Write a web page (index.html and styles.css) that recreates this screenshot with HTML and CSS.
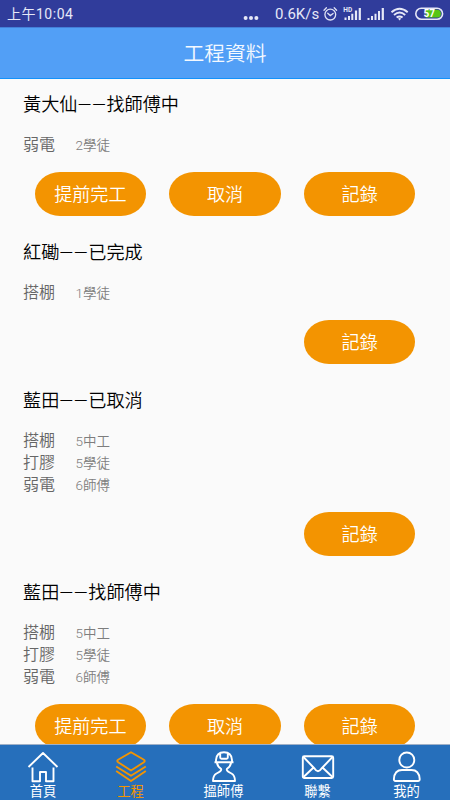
FILE: index.html
```html
<!DOCTYPE html>
<html lang="zh-Hant">
<head>
<meta charset="utf-8">
<title>工程資料</title>
<link rel="stylesheet" href="styles.css">
</head>
<body>
<div class="app">
  <div class="status">
    <span class="clock">上午10:04</span>
    <svg class="dots" width="16" height="6" viewBox="0 0 16 6"><g fill="#e6e8f7"><circle cx="2.6" cy="3" r="2"/><circle cx="8" cy="3" r="2"/><circle cx="13.4" cy="3" r="2"/></g></svg>
    <span class="speed">0.6K/s</span>
    <svg class="system" width="122" height="22" viewBox="322 3 122 22">
      <g fill="none" stroke="#dfe2f4" stroke-width="1.3" stroke-linecap="round">
        <circle cx="330.3" cy="14.6" r="5.4"/><path d="M327.7 13.2l2.6 2.4 2.8-2.1M324 10.2l2.4-2.4M336.6 10.2l-2.4-2.4"/>
      </g>
      <g fill="#e6e8f7">
        <path d="M344.500 17.6h2V20h-2zM348 16h2v4h-2zM351.3 13.7h2V20h-2zM354.9 10.500h2.200v9.500h-2.200zM358.700 8h2.200v12h-2.200z"/>
        <path d="M367.5 18h2v2h-2zM371 16h2v4h-2zM374.5 13.7h2V20h-2zM378 11h2v9h-2zM381.7 8h2.200v12h-2.200z"/>
        <text class="hd" x="343.3" y="12">HD</text>
      </g>
      <g fill="none" stroke="#e6e8f7" stroke-width="1.9"><path d="M391.5 12.3q8.1-7 16.2 0M394 15q5.6-4.8 11.2 0M396.6 17.6q3-2.4 6 0"/></g>
      <path d="M398 18.6q1.6-1.2 3.2 0L399.6 20.4z" fill="#e6e8f7"/>
      <rect x="415.8" y="8.2" width="26.8" height="11" rx="5.5" fill="none" stroke="#e6e8f7" stroke-width="1.6"/>
      <path d="M426 9.8h11a3.9 3.9 0 0 1 0 7.8h-11z" fill="#56c615"/>
      <text class="charge" x="429.2" y="17.2">57</text>
    </svg>
  </div>
  <header class="header">工程資料</header>
  <main class="list">
    <section class="job">
      <h2>黃大仙<span class="dash">——</span>找師傅中</h2>
      <div class="row"><span class="trade">弱電</span><span class="people">2學徒</span></div>
      <div class="actions"><button>提前完工</button><button>取消</button><button>記錄</button></div>
    </section>
    <section class="job">
      <h2>紅磡<span class="dash">——</span>已完成</h2>
      <div class="row"><span class="trade">搭棚</span><span class="people">1學徒</span></div>
      <div class="actions"><button class="last">記錄</button></div>
    </section>
    <section class="job">
      <h2>藍田<span class="dash">——</span>已取消</h2>
      <div class="row"><span class="trade">搭棚</span><span class="people">5中工</span></div>
      <div class="row"><span class="trade">打膠</span><span class="people">5學徒</span></div>
      <div class="row"><span class="trade">弱電</span><span class="people">6師傅</span></div>
      <div class="actions"><button class="last">記錄</button></div>
    </section>
    <section class="job">
      <h2>藍田<span class="dash">——</span>找師傅中</h2>
      <div class="row"><span class="trade">搭棚</span><span class="people">5中工</span></div>
      <div class="row"><span class="trade">打膠</span><span class="people">5學徒</span></div>
      <div class="row"><span class="trade">弱電</span><span class="people">6師傅</span></div>
      <div class="actions"><button>提前完工</button><button>取消</button><button>記錄</button></div>
    </section>
  </main>
  <nav class="nav">
    <a><svg viewBox="0 0 34 34"><path d="M2.500 17L17 3 31.500 17M6.500 17.500V31.200H14V22H20V31.200H27.500V17.500"/></svg><span>首頁</span></a>
    <a class="active"><svg viewBox="0 0 34 34"><path d="M17 2.2L29.500 9.500Q32 11 29.500 12.500L17 20.5 4.500 12.500Q2 11 4.500 9.500zM2.2 16.500L17 25.8 31.8 16.500M2.2 21L17 31 31.800 21"/></svg><span>工程</span></a>
    <a><svg viewBox="0 0 34 34"><path d="M9 12V10Q9.500 2.300 17 2.300T25 10V12M7.500 12.200H26.500M13.200 4V7.500Q13.200 8.700 14.400 8.700H19.600Q20.800 8.700 20.800 7.500V4M10 13Q10.500 16.500 14 18.700C15 20.500 12.500 22 9.500 23.500Q6 25.500 6 31H28Q28 25.500 24.500 23.500C21.500 22 19 20.500 20 18.700Q23.500 16.500 24 13"/></svg><span>搵師傅</span></a>
    <a><svg viewBox="0 0 34 34"><rect x="1.8" y="6.200" width="30.4" height="21.800" rx="1.5"/><path d="M2.5 7L13.500 18.500Q17 24 20.500 18.500L31.500 7M2.5 27L12 18M31.5 27L22 18"/></svg><span>聯繫</span></a>
    <a><svg viewBox="0 0 34 34"><circle cx="16.800" cy="10" r="7.5"/><path d="M5.500 31Q3.800 31 3.900 29Q4.500 20 12 20H21.500Q29 20 29.700 29Q29.800 31 28 31z"/></svg><span>我的</span></a>
  </nav>
</div>
</body>
</html>
```
FILE: styles.css
```css
* { box-sizing: border-box; }
body {
  margin: 0;
  font-family: Roboto, "Noto Sans CJK TC", sans-serif;
  font-weight: 350;
  background: #fafafa;
}
.app {
  height: 800px;
  display: flex;
  flex-direction: column;
  overflow: hidden;
}
.status {
  flex: none;
  height: 27px;
  display: flex;
  align-items: center;
  background: #303c9b;
  color: #e6e8f7;
  line-height: 27px;
  padding: 1px 6px 0 7px;
}
.clock {
  width: 236px;
  font-size: 14px;
  letter-spacing: .5px;
  font-weight: 400;
}
.dots { margin-top: 8px; }
.speed {
  font-size: 15px;
  font-weight: 400;
  width: 47px;
  margin-left: 16px;
  white-space: nowrap;
}
.system { flex: none; }
.hd { font: 700 6.5px Roboto, sans-serif; }
.charge {
  font: 700 10px Roboto, sans-serif;
  fill: #fff;
  text-anchor: middle;
}
.header {
  flex: none;
  height: 52px;
  border-top: 1px solid #437fd9;
  border-bottom: 1px solid #1392fb;
  background: #529ff6;
  color: #f4f9ff;
  font-size: 20.8px;
  line-height: 53px;
  text-align: center;
}
.list {
  flex: 1;
  min-height: 0;
  overflow: hidden;
}
.job { padding: 13px 23px 11.5px 23px; }
h2 {
  margin: 0 0 16px;
  height: 26px;
  font-size: 18.15px;
  font-weight: 350;
  line-height: 26px;
  color: #000;
}
.dash { letter-spacing: .5px; }
.row {
  display: flex;
  height: 22px;
  line-height: 22px;
  color: #666;
}
.trade { width: 52.5px; font-size: 16px; }
.people {
  font-size: 13.5px;
  color: #7d7d7d;
}
.actions {
  display: grid;
  grid-template-columns: repeat(3, 1fr);
  justify-items: center;
  margin-top: 16px;
}
button {
  width: 111.5px;
  height: 43.5px;
  border: 0;
  padding: 0 0 1px;
  border-radius: 25px / 22px;
  background: #f39401;
  color: #fff;
  font: 350 18.1px Roboto, "Noto Sans CJK TC", sans-serif;
}
.last { grid-column: 3; }
.nav {
  flex: none;
  height: 56px;
  display: grid;
  grid-template-columns: 86px 89px 97px 91px 87px;
  border-top: 1px solid #9fb0c7;
  background: #266fbb;
  color: #fff;
}
.nav a {
  display: flex;
  flex-direction: column;
  align-items: center;
  padding-top: 5px;
  font-size: 13.3px;
  font-weight: 400;
  line-height: 16px;
}
.nav svg {
  width: 34px;
  height: 34px;
  fill: none;
  stroke: currentColor;
  stroke-width: 1.9;
  stroke-linejoin: round;
}
.nav .active { color: #f39401; }
```
